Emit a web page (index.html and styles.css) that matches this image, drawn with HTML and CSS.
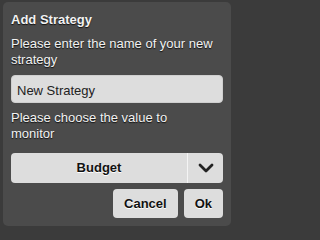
FILE: index.html
```html
<!DOCTYPE html>
<html>
<head>
<meta charset="utf-8">
<link rel="stylesheet" href="styles.css">
</head>
<body>
<div class="dialog">
  <div class="title">Add Strategy</div>
  <div class="label first">Please enter the name of your new strategy</div>
  <div class="input">New Strategy</div>
  <div class="label second">Please choose the value to monitor</div>
  <div class="select">
    <div class="select-value">Budget</div>
    <div class="select-arrow">
      <svg width="16" height="10" viewBox="0 0 16 10"><path d="M2 2 L8 8 L14 2" fill="none" stroke="#222" stroke-width="2.8" stroke-linecap="round" stroke-linejoin="round"/></svg>
    </div>
  </div>
  <div class="actions">
    <div class="btn">Cancel</div>
    <div class="btn">Ok</div>
  </div>
</div>
</body>
</html>
```
FILE: styles.css
```css
html, body {
  margin: 0;
  padding: 0;
}
body {
  background: #3b3b3b;
  width: 234px;
  height: 229px;
  overflow: hidden;
  font-family: "Liberation Sans", Arial, sans-serif;
  font-size: 13px;
  line-height: 16px;
  padding-top: 2px;
  box-sizing: border-box;
}
.dialog {
  margin: 0 3px 0 3px;
  background: #4b4b4b;
  border-radius: 5px;
  padding: 10px 8px 8px 8px;
  display: flex;
  flex-direction: column;
}
.title {
  color: #f2f2f2;
  font-weight: bold;
  text-shadow: 0 1px 1px #111;
}
.label {
  color: #f2f2f2;
  text-shadow: 0 1px 1px #111;
  padding-right: 9.5px;
}
.label.first {
  margin-top: 8px;
}
.label.second {
  margin-top: 7px;
}
.input {
  margin-top: 7px;
  height: 28px;
  box-sizing: border-box;
  background: #dddddd;
  border: 1px solid #cfcfcf;
  border-radius: 4px;
  color: #222;
  padding: 3px 5px 0;
  display: flex;
  align-items: center;
}
.select {
  margin-top: 11px;
  height: 30px;
  display: flex;
  background: #dddddd;
  border-radius: 4px;
  overflow: hidden;
}
.select-value {
  flex: 1;
  display: flex;
  align-items: center;
  justify-content: center;
  font-weight: bold;
  color: #111;
  text-shadow: 0 1px 0 #fff;
  border-right: 1px solid #f4f4f4;
}
.select-arrow {
  width: 35px;
  display: flex;
  align-items: center;
  justify-content: center;
}
.actions {
  margin-top: 6px;
  display: flex;
  justify-content: flex-end;
  gap: 6px;
}
.btn {
  height: 29px;
  padding: 0 11px;
  background: #dddddd;
  border-radius: 4px;
  display: flex;
  align-items: center;
  font-weight: bold;
  color: #111;
  text-shadow: 0 1px 0 #fff;
}
```
